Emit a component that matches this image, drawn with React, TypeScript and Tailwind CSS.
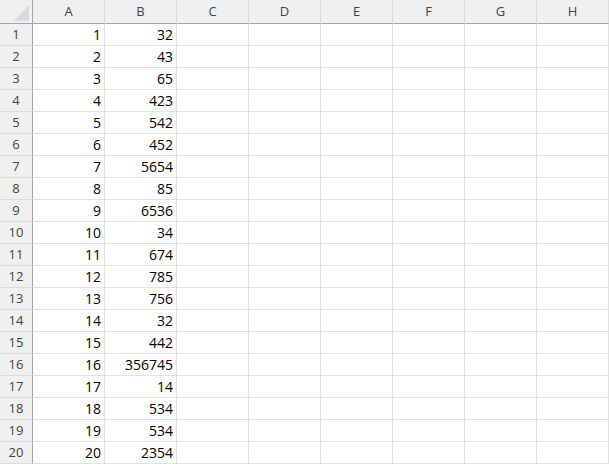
const cols = ['A', 'B', 'C', 'D', 'E', 'F', 'G', 'H'];
const colB = [32, 43, 65, 423, 542, 452, 5654, 85, 6536, 34, 674, 785, 756, 32, 442, 356745, 14, 534, 534, 2354];

export default function App() {
  return (
    <div className="w-[609px] h-[464px] overflow-hidden bg-white" style={{ fontFamily: '"Open Sans", "Noto Sans", sans-serif' }}>
      <div className="grid grid-cols-[33px_repeat(8,72px)]">
        {/* corner */}
        <div className="h-6 bg-[#f0f0f0] border-r border-b border-[#a5a5a5] flex items-end justify-end pr-[3px] pb-[2px]">
          <svg width="15" height="16" viewBox="0 0 15 16">
            <polygon points="15,0 15,16 0,16" fill="#dadada" />
          </svg>
        </div>
        {cols.map((c) => (
          <div
            key={c}
            className="h-6 bg-[#f0f0f0] border-r border-[#dcdcdc] border-b-[1px] border-b-[#a5a5a5] flex items-center justify-center text-[13px] text-[#444]"
          >
            {c}
          </div>
        ))}
        {colB.map((b, i) => (
          <Row key={i} n={i + 1} b={b} />
        ))}
      </div>
    </div>
  );
}

function Row({ n, b }: { n: number; b: number }) {
  return (
    <>
      <div className="h-[22px] bg-[#f0f0f0] border-r border-r-[#a5a5a5] border-b border-b-[#dcdcdc] flex items-center justify-center text-[13px] text-[#444]">
        {n}
      </div>
      <div className="h-[22px] border-r border-b border-[#e1e1e1] flex items-center justify-end pr-[3px] text-[14px] text-black">
        {n}
      </div>
      <div className="h-[22px] border-r border-b border-[#e1e1e1] flex items-center justify-end pr-[3px] text-[14px] text-black">
        {b}
      </div>
      {cols.slice(2).map((c) => (
        <div key={c} className="h-[22px] border-r border-b border-[#e1e1e1]" />
      ))}
    </>
  );
}
